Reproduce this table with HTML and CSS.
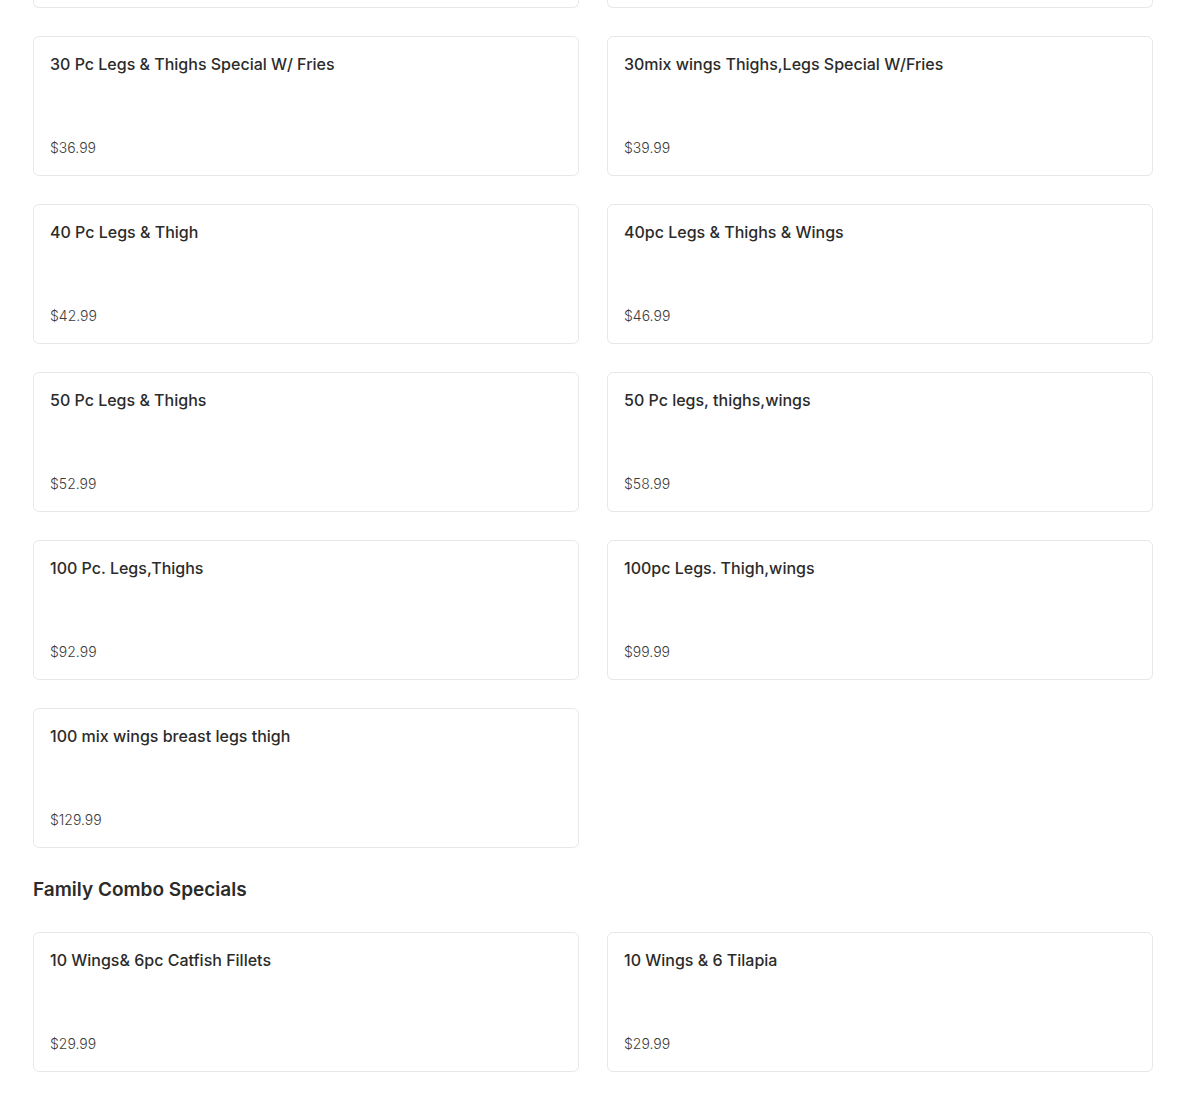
FILE: index.html
```html
<!DOCTYPE html>
<html>
<head>
  <title>Menu</title>
  <link rel="stylesheet" href="styles.css">
</head>
<body>
  <div class="menu">
    <div class="grid">
      <div class="card tail"></div>
      <div class="card tail"></div>

      <div class="card">
        <h4>30 Pc Legs &amp; Thighs Special W/ Fries</h4>
        <span class="price">$36.99</span>
      </div>
      <div class="card">
        <h4>30mix wings Thighs,Legs Special W/Fries</h4>
        <span class="price">$39.99</span>
      </div>
      <div class="card">
        <h4>40 Pc Legs &amp; Thigh</h4>
        <span class="price">$42.99</span>
      </div>
      <div class="card">
        <h4>40pc Legs &amp; Thighs &amp; Wings</h4>
        <span class="price">$46.99</span>
      </div>
      <div class="card">
        <h4>50 Pc Legs &amp; Thighs</h4>
        <span class="price">$52.99</span>
      </div>
      <div class="card">
        <h4>50 Pc legs, thighs,wings</h4>
        <span class="price">$58.99</span>
      </div>
      <div class="card">
        <h4>100 Pc. Legs,Thighs</h4>
        <span class="price">$92.99</span>
      </div>
      <div class="card">
        <h4>100pc Legs. Thigh,wings</h4>
        <span class="price">$99.99</span>
      </div>
      <div class="card">
        <h4>100 mix wings breast legs thigh</h4>
        <span class="price">$129.99</span>
      </div>
    </div>

    <h3 class="section-title">Family Combo Specials</h3>

    <div class="grid">
      <div class="card">
        <h4>10 Wings&amp; 6pc Catfish Fillets</h4>
        <span class="price">$29.99</span>
      </div>
      <div class="card">
        <h4>10 Wings &amp; 6 Tilapia</h4>
        <span class="price">$29.99</span>
      </div>
    </div>
  </div>
</body>
</html>
```

FILE: styles.css
```css
body {
  margin: 0;
  font-family: 'Inter', 'Noto Sans', sans-serif;
  background: #fff;
  color: #222;
}

.menu {
  padding: 0 32px 0 33px;
}

.grid {
  display: grid;
  grid-template-columns: 1fr 1fr;
  gap: 28px;
}

.card {
  border: 1px solid #e8e8e8;
  border-radius: 6px;
  height: 140px;
  box-sizing: border-box;
  padding: 15px 16px 17px;
  display: flex;
  flex-direction: column;
  justify-content: space-between;
}

.card.tail {
  height: 8px;
  padding: 0;
  border-top: none;
  border-radius: 0 0 6px 6px;
}

.card h4 {
  margin: 0;
  font-size: 16px;
  font-weight: 500;
  line-height: 24px;
  color: #2b2b2b;
}

.price {
  font-size: 14px;
  font-weight: 300;
  line-height: 20px;
  color: #3c3c3c;
}

.section-title {
  margin: 0;
  padding: 30px 0 30px;
  font-size: 19px;
  font-weight: 600;
  line-height: 24px;
  color: #2b2b2b;
}
```
